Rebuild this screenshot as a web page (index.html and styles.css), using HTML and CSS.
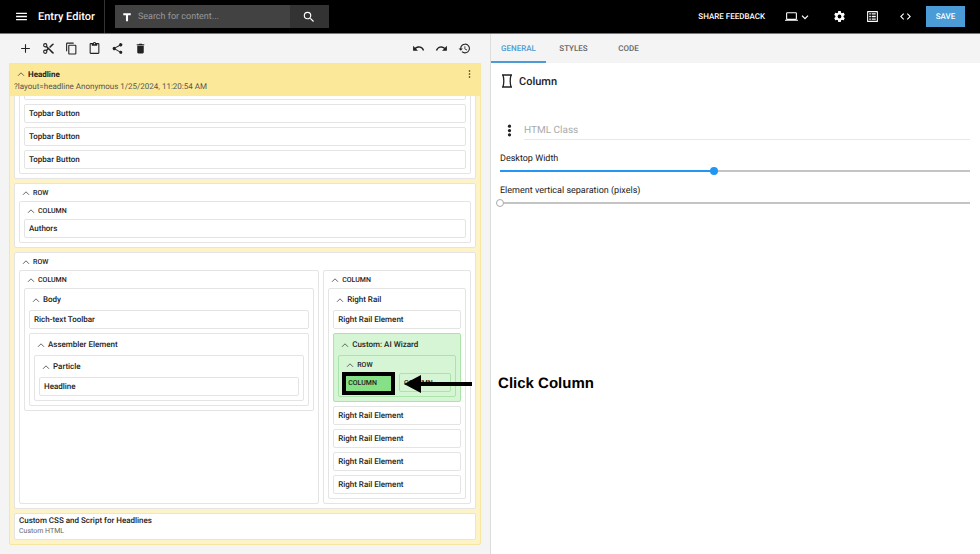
FILE: index.html
```
<!DOCTYPE html>
<html lang="en">
<head>
    <meta charset="UTF-8">
    <title>Entry Editor</title>
    <link rel="stylesheet" href="styles.css">
</head>
<body>
<!-- shared chevron -->
<svg class="defs" width="0" height="0">
    <symbol id="chev" viewBox="0 0 8 8"><path d="M1 5.8 4 2.8l3 3" fill="none" stroke="currentColor" stroke-width="0.9"/></symbol>
</svg>

<header class="topbar">
    <div class="brand">
        <button class="icon" aria-label="Menu"><svg viewBox="0 0 24 24"><path d="M2 5h20v2.4H2zm0 5.8h20v2.4H2zm0 5.8h20V19H2z"/></svg></button>
        <h1>Entry Editor</h1>
    </div>
    <form class="search">
        <svg class="type" viewBox="0 0 24 24"><path d="M3 3h18v5h-6.500v14h-5V8H3z"/></svg>
        <input type="text" placeholder="Search for content..." aria-label="Search for content">
        <button type="button" class="find" aria-label="Search"><svg viewBox="0 0 24 24"><path d="M15.500 14h-.79l-.28-.27A6.470 6.470 0 0 0 16 9.500 6.500 6.500 0 1 0 9.500 16c1.610 0 3.090-.59 4.230-1.570l.27.28v.79l5 4.990L20.490 19zm-6 0a4.500 4.500 0 1 1 0-9 4.500 4.500 0 0 1 0 9z"/></svg></button>
    </form>
    <nav class="actions">
        <button class="feedback">SHARE FEEDBACK</button>
        <button class="icon device" aria-label="Device">
            <svg viewBox="0 0 24 24"><path d="M20 18a2 2 0 0 0 2-2V6a2 2 0 0 0-2-2H4a2 2 0 0 0-2 2v10c0 1.100.9 2 2 2H0v2h24v-2zM4 6h16v10H4z"/></svg>
            <svg class="small" viewBox="0 0 8 8"><path d="M1 2.600l3 3 3-3" fill="none" stroke="#fff" stroke-width="1.300"/></svg>
        </button>
        <button class="icon" aria-label="Settings"><svg viewBox="0 0 24 24"><path d="M19.430 12.980c.04-.32.07-.64.07-.98s-.03-.66-.07-.98l2.110-1.650c.19-.15.24-.42.12-.64l-2-3.460c-.12-.22-.39-.3-.61-.22l-2.490 1c-.52-.4-1.080-.73-1.690-.98l-.38-2.650A.49.49 0 0 0 14 2h-4c-.25 0-.46.18-.49.42l-.38 2.650c-.61.25-1.170.59-1.690.98l-2.490-1c-.23-.09-.49 0-.61.22l-2 3.460c-.13.22-.07.49.12.64l2.110 1.650c-.04.32-.07.65-.07.98s.03.66.07.98l-2.110 1.650c-.19.15-.24.42-.12.64l2 3.460c.12.22.39.3.61.22l2.490-1c.52.4 1.080.73 1.690.98l.38 2.650c.03.24.24.42.49.42h4c.25 0 .46-.18.49-.42l.38-2.650c.61-.25 1.170-.59 1.690-.98l2.490 1c.23.09.49 0 .61-.22l2-3.460c.12-.22.07-.49-.12-.64zM12 15.500a3.500 3.500 0 1 1 0-7 3.500 3.500 0 0 1 0 7z"/></svg></button>
        <button class="icon" aria-label="Content"><svg viewBox="0 0 24 24"><path d="M3 2h18a1 1 0 0 1 1 1v18a1 1 0 0 1-1 1H3a1 1 0 0 1-1-1V3a1 1 0 0 1 1-1zm1 2v16h16V4zm2 2h3v2.500H6zm4.500 0H18v2.500h-7.500zM6 10.800h3v2.400H6zm4.500 0H18v2.400h-7.500zM6 15.500h3V18H6zm4.500 0H18V18h-7.500z"/></svg></button>
        <button class="icon" aria-label="Code"><svg viewBox="0 0 24 24"><path d="M9.400 16.600 4.800 12l4.600-4.600L8 6l-6 6 6 6zm5.200 0 4.600-4.600-4.600-4.600L16 6l6 6-6 6z"/></svg></button>
        <button class="save">SAVE</button>
    </nav>
</header>

<main class="panes">
    <section class="left">
        <div class="toolbar">
            <button class="icon" aria-label="Add"><svg viewBox="0 0 24 24"><path d="M20 13h-7v7h-2v-7H4v-2h7V4h2v7h7z"/></svg></button>
            <button class="icon" aria-label="Cut"><svg viewBox="0 0 24 24"><path d="M9.640 7.640c.23-.5.36-1.050.36-1.640a4 4 0 1 0-4 4c.59 0 1.140-.13 1.640-.36L10 12l-2.360 2.360A3.900 3.900 0 0 0 6 14a4 4 0 1 0 4 4c0-.59-.13-1.140-.36-1.640L12 14l7 7h3v-1zM6 8a2 2 0 1 1 0-4 2 2 0 0 1 0 4zm0 12a2 2 0 1 1 0-4 2 2 0 0 1 0 4zM19 3l-6 6 2 2 7-7V3z"/></svg></button>
            <button class="icon" aria-label="Copy"><svg viewBox="0 0 24 24"><path d="M16 1H4a2 2 0 0 0-2 2v14h2V3h12zm3 4H8a2 2 0 0 0-2 2v14c0 1.100.9 2 2 2h11a2 2 0 0 0 2-2V7a2 2 0 0 0-2-2zm0 16H8V7h11z"/></svg></button>
            <button class="icon" aria-label="Paste"><svg viewBox="0 0 24 24"><path d="M19 2h-4.180a3 3 0 0 0-5.640 0H5a2 2 0 0 0-2 2v16c0 1.100.9 2 2 2h14a2 2 0 0 0 2-2V4a2 2 0 0 0-2-2zm-7 0a1 1 0 1 1 0 2 1 1 0 0 1 0-2zm7 18H5V4h2v3h10V4h2z"/></svg></button>
            <button class="icon" aria-label="Share"><svg viewBox="0 0 24 24"><path d="M18 16.080c-.76 0-1.440.3-1.960.77L8.910 12.700a3.300 3.300 0 0 0 0-1.400l7.050-4.110A3 3 0 1 0 15 5c0 .24.04.47.09.7L8.040 9.810a3 3 0 1 0 0 4.380l7.120 4.160A2.920 2.920 0 1 0 18 16.080z"/></svg></button>
            <button class="icon" aria-label="Delete"><svg viewBox="0 0 24 24"><path d="M6 19c0 1.100.9 2 2 2h8a2 2 0 0 0 2-2V7H6zM19 4h-3.500l-1-1h-5l-1 1H5v2h14z"/></svg></button>
            <span class="spacer"></span>
            <button class="icon" aria-label="Undo"><svg viewBox="0 0 24 24"><path d="M12.500 8c-2.650 0-5.050.99-6.900 2.600L2 7v9h9l-3.620-3.620A8 8 0 0 1 20.100 16l2.370-.78A10.500 10.500 0 0 0 12.500 8z"/></svg></button>
            <button class="icon" aria-label="Redo"><svg viewBox="0 0 24 24"><path d="M18.400 10.600A10.500 10.500 0 0 0 1.540 15.220L3.900 16a8 8 0 0 1 12.720-3.620L13 16h9V7z"/></svg></button>
            <button class="icon" aria-label="History"><svg viewBox="0 0 24 24"><path d="M13 3a9 9 0 0 0-9 9H1l3.890 3.890.07.14L9 12H6a7 7 0 1 1 2.060 4.940l-1.420 1.420A9 9 0 1 0 13 3zm-1 5v5l4.280 2.540.72-1.210-3.500-2.080V8z"/></svg></button>
        </div>

        <div class="tree">
            <div class="tree-head">
                <div>
                    <button class="name"><svg><use href="#chev"/></svg>Headline</button>
                    <p>?layout=headline Anonymous 1/25/2024, 11:20:54 AM</p>
                </div>
                <button class="icon more" aria-label="More"><svg viewBox="0 0 24 24"><circle cx="12" cy="4" r="2.200"/><circle cx="12" cy="12" r="2.200"/><circle cx="12" cy="20" r="2.200"/></svg></button>
            </div>
            <div class="tree-body">
                <div class="box scrolled">
                    <div class="box">
                        <div class="leaf"></div>
                        <div class="leaf">Topbar Button</div>
                        <div class="leaf">Topbar Button</div>
                        <div class="leaf">Topbar Button</div>
                    </div>
                </div>

                <div class="box">
                    <button class="label"><svg><use href="#chev"/></svg>ROW</button>
                    <div class="box">
                        <button class="label"><svg><use href="#chev"/></svg>COLUMN</button>
                        <div class="leaf">Authors</div>
                    </div>
                </div>

                <div class="box">
                    <button class="label"><svg><use href="#chev"/></svg>ROW</button>
                    <div class="cols main">
                        <div class="box">
                            <button class="label"><svg><use href="#chev"/></svg>COLUMN</button>
                            <div class="box">
                                <button class="title"><svg><use href="#chev"/></svg>Body</button>
                                <div class="leaf">Rich-text Toolbar</div>
                                <div class="box">
                                    <button class="title"><svg><use href="#chev"/></svg>Assembler Element</button>
                                    <div class="box">
                                        <button class="title"><svg><use href="#chev"/></svg>Particle</button>
                                        <div class="leaf">Headline</div>
                                    </div>
                                </div>
                            </div>
                        </div>
                        <div class="box">
                            <button class="label"><svg><use href="#chev"/></svg>COLUMN</button>
                            <div class="box">
                                <button class="title"><svg><use href="#chev"/></svg>Right Rail</button>
                                <div class="leaf">Right Rail Element</div>
                                <div class="box green">
                                    <button class="title"><svg><use href="#chev"/></svg>Custom: AI Wizard</button>
                                    <div class="box">
                                        <button class="label"><svg><use href="#chev"/></svg>ROW</button>
                                        <div class="cols">
                                            <button class="leaf col selected">COLUMN</button>
                                            <div class="leaf col">COLUMN
                                                <!-- callout pointing at the selected column -->
                                                <div class="callout">
                                                    <svg viewBox="0 0 68 20"><path d="M0 10 17 1v7h51v4H17v7z"/></svg>
                                                    <strong>Click Column</strong>
                                                </div>
                                            </div>
                                        </div>
                                    </div>
                                </div>
                                <div class="leaf">Right Rail Element</div>
                                <div class="leaf">Right Rail Element</div>
                                <div class="leaf">Right Rail Element</div>
                                <div class="leaf">Right Rail Element</div>
                            </div>
                        </div>
                    </div>
                </div>

                <div class="box custom">
                    <h2>Custom CSS and Script for Headlines</h2>
                    <p>Custom HTML</p>
                </div>
            </div>
        </div>
    </section>

    <section class="right">
        <nav class="tabs">
            <button class="current">GENERAL</button>
            <button>STYLES</button>
            <button>CODE</button>
        </nav>
        <div class="props">
            <h2><svg viewBox="0 0 12 14"><path d="M1 1h10M1 13h10M2 1q1.600 6 0 12M10 1q-1.600 6 0 12" fill="none" stroke="#222" stroke-width="1.300"/></svg>Column</h2>
            <div class="field">
                <button class="icon" aria-label="Options"><svg viewBox="0 0 24 24"><circle cx="12" cy="4" r="3"/><circle cx="12" cy="12" r="3"/><circle cx="12" cy="20" r="3"/></svg></button>
                <input type="text" placeholder="HTML Class" aria-label="HTML Class">
            </div>
            <div class="slider">
                <label for="width">Desktop Width</label>
                <input type="range" id="width" min="1" max="12" value="6" style="--fill: 45.45%">
            </div>
            <div class="slider">
                <label for="sep">Element vertical separation (pixels)</label>
                <input type="range" id="sep" class="empty" min="0" max="100" value="0" style="--fill: 0%">
            </div>
        </div>
    </section>
</main>
</body>
</html>
```
FILE: styles.css
```
* {
    box-sizing: border-box;
    margin: 0;
    padding: 0;
}

body {
    display: flex;
    flex-direction: column;
    min-height: 100vh;
    font-family: Roboto, sans-serif;
    font-size: 8px;
    text-rendering: geometricPrecision;
    color: #222;
    background: #fff;
}

button {
    border: 0;
    background: none;
    font: inherit;
    color: inherit;
    text-rendering: inherit;
    cursor: pointer;
}

input {
    border: 0;
    outline: 0;
    background: none;
    font: inherit;
    color: inherit;
    text-rendering: inherit;
}

.defs {
    position: absolute;
}

.icon {
    display: flex;
    align-items: center;
    justify-content: center;
}

.icon svg {
    width: 13px;
    height: 13px;
    fill: currentColor;
}

/* top bar */
.topbar {
    display: flex;
    align-items: center;
    height: 34px;
    padding-right: 15px;
    background: #000;
    border-bottom: 1px solid #777;
    color: #fff;
}

.brand {
    display: flex;
    align-items: center;
    gap: 10px;
    height: 100%;
    padding: 0 9px 0 15px;
    border-right: 1px solid #333;
}

.brand h1 {
    font-size: 11px;
    font-weight: 500;
}

.search {
    display: flex;
    align-items: center;
    width: 214px;
    height: 23px;
    margin-left: 10px;
    padding-left: 7px;
    background: #424242;
}

.search .type {
    width: 10px;
    height: 10px;
    fill: #fff;
}

.search input {
    flex: 1;
    min-width: 0;
    padding-left: 6px;
    font-size: 9px;
}

.search input::placeholder {
    color: #999;
}

.find {
    display: flex;
    align-items: center;
    justify-content: center;
    width: 39px;
    height: 100%;
    background: #333;
}

.find svg {
    width: 14px;
    height: 14px;
    fill: #fff;
}

.actions {
    display: flex;
    align-items: center;
    gap: 20px;
    margin-left: auto;
}

.feedback {
    font-weight: 500;
}

.device {
    gap: 3px;
    margin-right: 4px;
}

.device .small {
    width: 8px;
    height: 8px;
}

.save {
    width: 39px;
    height: 21px;
    margin-left: -6px;
    background: #4a9bd6;
    font-weight: 500;
}

/* panes */
.panes {
    display: flex;
    flex: 1;
}

.left {
    width: 50%;
    padding: 0 9px;
    background: #f4f4f4;
}

.right {
    flex: 1;
    min-width: 0;
    border-left: 1px solid #ddd;
}

.toolbar {
    display: flex;
    align-items: center;
    gap: 10px;
    height: 29px;
    padding: 0 10px;
}

.spacer {
    flex: 1;
}

/* entry tree */
.tree {
    border: 1px solid #f5e6a0;
    border-radius: 0 0 2px 2px;
    background: #fdf3c7;
}

.tree-head {
    position: relative;
    z-index: 1;
    display: flex;
    justify-content: space-between;
    align-items: flex-start;
    height: 32px;
    padding: 4px 6px 4px 4px;
    background: #fbe999;
}

.tree-head p {
    margin-top: 1px;
    line-height: 12px;
    color: #555;
}

.name,
.title,
.label {
    display: flex;
    align-items: center;
    gap: 3px;
    padding-left: 3px;
    font-weight: 500;
}

.name {
    height: 12px;
    font-weight: 700;
}

.title {
    height: 21px;
}

.label {
    height: 17px;
    font-size: 7px;
}

.name svg,
.title svg,
.label svg {
    width: 8px;
    height: 8px;
    color: #555;
}

.more svg {
    width: 9px;
    height: 12px;
}

.tree-body {
    display: flex;
    flex-direction: column;
    gap: 4px;
    padding: 0 4px 4px;
}

.box {
    display: flex;
    flex-direction: column;
    padding: 0 4px 4px;
    background: #fff;
    border: 1px solid #e4e4e4;
    border-radius: 2px;
}

.leaf {
    height: 19px;
    padding: 0 4px;
    line-height: 18px;
    background: #fff;
    border: 1px solid #e4e4e4;
    border-radius: 2px;
    font-weight: 500;
    text-align: left;
}

.leaf + .leaf,
.leaf + .box,
.box + .leaf {
    margin-top: 4px;
}

/* first row is partly scrolled under the head */
.scrolled {
    margin-top: -17px;
}

.cols {
    display: grid;
    grid-template-columns: 1fr 1fr;
    gap: 4px;
}

.main {
    grid-template-columns: 67fr 33fr;
}

.green,
.green .box,
.green .leaf {
    background: #d5f5d5;
    border-color: #a9e5a9;
}

.cols .col {
    position: relative;
    margin: 0;
    font-size: 7px;
}

.green .selected {
    background: #86e086;
}

.selected::after {
    content: "";
    position: absolute;
    inset: -2px -1px -4px -2px;
    border: 4px solid #000;
}

.callout {
    position: absolute;
    left: 4px;
    top: 0;
    display: flex;
    align-items: center;
    gap: 26px;
    height: 20px;
    font-family: "Liberation Sans", Arial, sans-serif;
    font-size: 15px;
    color: #000;
    white-space: nowrap;
}

.callout svg {
    width: 68px;
    height: 20px;
}

.custom {
    height: 27px;
    padding: 2px 4px;
}

.custom h2 {
    font-size: 8px;
    font-weight: 500;
    line-height: 10px;
}

.custom p {
    font-size: 7px;
    line-height: 10px;
    color: #666;
}

/* properties */
.tabs {
    display: flex;
    height: 29px;
    background: #f4f4f4;
}

.tabs button {
    width: 55px;
    font-weight: 500;
    color: #666;
}

.tabs .current {
    padding-top: 2px;
    color: #4a9bd6;
    border-bottom: 2px solid #4a9bd6;
}

.props {
    padding: 10px 10px 0 9px;
}

.props h2 {
    display: flex;
    align-items: center;
    gap: 6px;
    height: 16px;
    padding-left: 1px;
    font-size: 11px;
    font-weight: 500;
}

.props h2 svg {
    width: 12px;
    height: 14px;
}

.field {
    display: flex;
    align-items: center;
    gap: 8px;
    margin: 32px 0 13px;
    padding-left: 3px;
}

.field input {
    flex: 1;
    height: 19px;
    border-bottom: 1px solid #e8e8e8;
    font-size: 10px;
}

.field input::placeholder {
    color: #aaa;
}

.slider {
    display: flex;
    flex-direction: column;
    gap: 2px;
    margin-bottom: 10px;
}

.slider label {
    font-size: 9px;
    line-height: 12px;
}

.slider input {
    width: calc(100% + 8px);
    height: 8px;
    margin: 0 -4px;
    appearance: none;
    background: linear-gradient(to right, #2196f3 var(--fill), #c4c4c4 var(--fill)) center / calc(100% - 8px) 2px no-repeat;
}

.slider input::-webkit-slider-thumb {
    appearance: none;
    width: 8px;
    height: 8px;
    border-radius: 50%;
    background: #2196f3;
}

.slider .empty::-webkit-slider-thumb {
    background: #fff;
    border: 1px solid #aaa;
}
```
